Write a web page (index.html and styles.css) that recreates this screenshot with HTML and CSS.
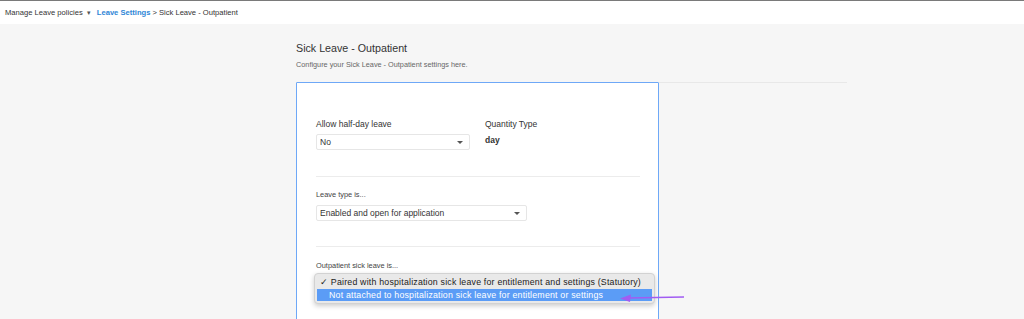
FILE: index.html
```html
<!DOCTYPE html>
<html lang="en">
<head>
    <meta charset="UTF-8">
    <meta name="viewport" content="width=device-width, initial-scale=1.0">
    <title>Sick Leave - Outpatient</title>
    <link rel="stylesheet" href="styles.css">
</head>
<body>
    <div class="topbar">
        <span class="crumb">Manage Leave policies <span class="caret">&#9662;</span></span>
        <a class="crumb-link" href="#">Leave Settings</a>
        <span class="crumb">&gt; Sick Leave - Outpatient</span>
    </div>

    <div class="page">
        <h1>Sick Leave - Outpatient</h1>
        <p class="subtitle">Configure your Sick Leave - Outpatient settings here.</p>

        <div class="header-line">
            <div class="card">
                <div class="row">
                    <div class="field">
                        <label>Allow half-day leave</label>
                        <div class="select small">No <span class="arrow"></span></div>
                    </div>
                    <div class="field">
                        <label>Quantity Type</label>
                        <div class="value">day</div>
                    </div>
                </div>

                <hr>

                <div class="section">
                    <label class="minor">Leave type is...</label>
                    <div class="select wide">Enabled and open for application <span class="arrow"></span></div>
                </div>

                <hr class="tight">

                <div class="section last">
                    <label class="minor">Outpatient sick leave is...</label>
                    <div class="menu-wrap">
                        <div class="select full"></div>
                        <div class="menu">
                            <div class="option">&#10003; Paired with hospitalization sick leave for entitlement and settings (Statutory)</div>
                            <div class="option active">Not attached to hospitalization sick leave for entitlement or settings</div>
                        </div>
                        <svg class="pointer" width="66" height="10" viewBox="0 0 66 10">
                            <line x1="8" y1="5" x2="64" y2="4" stroke="#a15cf2" stroke-width="1.6"/>
                            <polygon points="0,5.5 11,1.5 10,9" fill="#a15cf2"/>
                        </svg>
                    </div>
                </div>

                <hr>
            </div>
        </div>
    </div>
</body>
</html>
```

FILE: styles.css
```css
body {
    margin: 0;
    font-family: "Liberation Sans", Arial, sans-serif;
    background-color: #f6f6f6;
    color: #333;
    height: 319px;
    overflow: hidden;
}
.topbar {
    height: 23px;
    background-color: #fff;
    border-top: 1px solid #7a7a7a;
    display: flex;
    align-items: center;
    padding-left: 5px;
    font-size: 7.6px;
    color: #333;
}
.caret {
    font-size: 7px;
    color: #555;
    margin-left: 2px;
    margin-right: 6px;
}
.crumb-link {
    color: #2e86d6;
    font-weight: bold;
    text-decoration: none;
    margin-right: 2px;
}
.page {
    margin-left: 296px;
    width: 551px;
    padding-top: 17px;
}
h1 {
    margin: 0;
    font-size: 10.7px;
    font-weight: normal;
    color: #333;
    line-height: 14px;
}
.subtitle {
    margin: 5px 0 0;
    font-size: 7.3px;
    color: #666;
    line-height: 10px;
}
.header-line {
    margin-top: 12px;
    border-top: 1px solid #e8e8e8;
}
.card {
    margin-top: -1px;
    width: 324px;
    height: 240px;
    background-color: #fff;
    border: 1px solid #6ea8f7;
    border-radius: 1px;
    padding: 36px 18px 0 19px;
}
.row {
    display: flex;
    gap: 15px;
}
label {
    display: block;
    font-size: 8.5px;
    color: #333;
    line-height: 10px;
    margin-bottom: 5px;
}
label.minor {
    font-size: 7.4px;
    color: #444;
}
.select {
    position: relative;
    height: 14px;
    border: 1px solid #e6e6e6;
    border-radius: 2px;
    background-color: #fff;
    font-size: 8.5px;
    line-height: 14px;
    padding-left: 3px;
    color: #333;
    box-sizing: content-box;
}
.select.small {
    width: 149px;
}
.select.wide {
    width: 206px;
}
.select.full {
    width: 320px;
}
.arrow {
    position: absolute;
    right: 6px;
    top: 6px;
    border-left: 3px solid transparent;
    border-right: 3px solid transparent;
    border-top: 3px solid #555;
}
.value {
    font-size: 8.5px;
    font-weight: bold;
    line-height: 12px;
    margin-top: 1px;
}
hr {
    border: none;
    border-top: 1px solid #ececec;
    margin: 26px 0 0;
}
hr.tight {
    margin-top: 25px;
}
.section {
    padding-top: 13px;
}
.section.last {
    padding-top: 14px;
}
.menu-wrap {
    position: relative;
    height: 16px;
}
.section.last + hr {
    margin-top: 30px;
}
.menu {
    position: absolute;
    left: -2px;
    top: -3px;
    width: 341px;
    height: 31px;
    box-sizing: border-box;
    padding: 2px 2px;
    background-color: #e9e9e9;
    border: 1px solid #d2d2d2;
    border-radius: 4px;
    box-shadow: 0 2px 5px rgba(0, 0, 0, 0.2);
}
.option {
    font-size: 8.8px;
    letter-spacing: 0.2px;
    line-height: 12px;
    height: 12px;
    padding-left: 10px;
    color: #222;
    white-space: nowrap;
}
.option:first-child {
    padding-left: 3px;
}
.option.active {
    background-color: #5b9cf6;
    color: #fff;
    padding-left: 12px;
    margin-top: 1px;
}
.pointer {
    position: absolute;
    left: 304px;
    top: 17px;
}
```
